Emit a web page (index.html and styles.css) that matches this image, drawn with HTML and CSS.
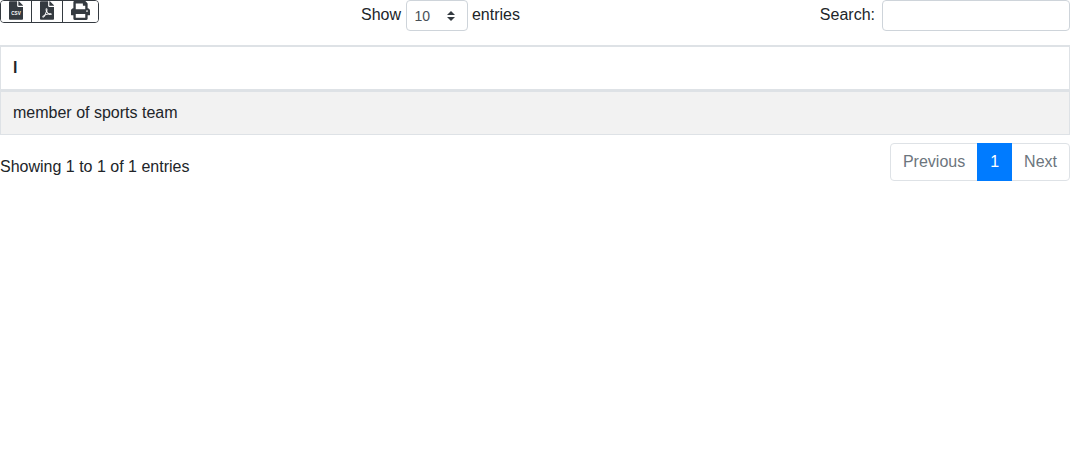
FILE: index.html
```html
<!DOCTYPE html>
<html lang="en">
<head>
  <meta charset="UTF-8">
  <meta name="viewport" content="width=device-width, initial-scale=1.0">
  <title>Entries</title>
  <link rel="stylesheet" href="styles.css">
</head>
<body>

<div class="top-row">
  <div class="export-buttons">
    <button type="button" class="export-btn" title="CSV">
      <svg class="icon icon-file" viewBox="0 0 384 512">
        <path d="M224 136V0H24C10.7 0 0 10.7 0 24v464c0 13.3 10.7 24 24 24h336c13.3 0 24-10.7 24-24V160H248c-13.2 0-24-10.8-24-24zm160-14.1v6.1H256V0h6.1c6.4 0 12.5 2.5 17 7l97.9 98c4.5 4.5 7 10.6 7 16.9z"/>
        <text class="icon-label" x="192" y="380" text-anchor="middle" textLength="260" lengthAdjust="spacingAndGlyphs">CSV</text>
      </svg>
    </button>
    <button type="button" class="export-btn" title="PDF">
      <svg class="icon icon-file" viewBox="0 0 384 512">
        <path d="M181.9 256.1c-5-16-4.9-46.9-2-46.9 8.4 0 7.6 36.9 2 46.9zm-1.7 47.2c-7.7 20.2-17.3 43.3-28.4 62.7 18.3-7 39-17.2 62.9-21.9-12.7-9.6-24.9-23.4-34.5-40.8zM86.1 428.1c0 .8 13.2-5.4 34.9-40.2-6.7 6.3-29.1 24.5-34.9 40.2zM248 160h136v328c0 13.3-10.7 24-24 24H24c-13.3 0-24-10.7-24-24V24C0 10.7 10.7 0 24 0h200v136c0 13.2 10.8 24 24 24zm-8 171.8c-20-12.2-33.3-29-42.7-53.8 4.5-18.5 11.6-46.6 6.2-64.2-4.7-29.4-42.4-26.5-47.8-6.8-5 18.3-.4 44.1 8.1 77-11.6 27.6-28.7 64.6-40.8 85.8-.1 0-.1.1-.2.1-27.1 13.9-73.6 44.5-54.5 68 5.6 6.9 16 10 21.5 10 17.9 0 35.7-18 61.1-61.8 25.8-8.5 54.1-19.1 79-23.2 21.7 11.8 47.1 19.5 64 19.5 29.2 0 31.2-32 19.7-43.4-13.9-13.6-54.3-9.7-73.6-7.2zM377 105L279 7c-4.5-4.5-10.6-7-17-7h-6v128h128v-6.1c0-6.3-2.5-12.4-7-16.9zm-74.1 255.3c4.1-2.7-2.5-11.9-42.8-9 37.1 15.8 42.8 9 42.8 9z"/>
      </svg>
    </button>
    <button type="button" class="export-btn" title="Print">
      <svg class="icon icon-print" viewBox="0 0 512 512">
        <path d="M448 192V77.25c0-8.49-3.37-16.62-9.37-22.63L393.37 9.37c-6-6-14.14-9.37-22.63-9.37H96C78.33 0 64 14.33 64 32v160c-35.35 0-64 28.65-64 64v112c0 8.84 7.16 16 16 16h48v96c0 17.67 14.33 32 32 32h320c17.67 0 32-14.33 32-32v-96h48c8.84 0 16-7.16 16-16V256c0-35.35-28.65-64-64-64zm-64 256H128v-96h256v96zm0-224H128V64h192v48c0 8.84 7.16 16 16 16h48v96zm48 72c-13.25 0-24-10.75-24-24 0-13.26 10.75-24 24-24s24 10.74 24 24c0 13.25-10.75 24-24 24z"/>
      </svg>
    </button>
  </div>

  <label class="length-control">
    Show
    <select class="length-select">
      <option>10</option>
      <option>25</option>
      <option>50</option>
      <option>100</option>
    </select>
    entries
  </label>

  <label class="search-control">
    Search:
    <input type="search" class="search-input">
  </label>
</div>

<table class="data-table">
  <thead>
    <tr><th>l</th></tr>
  </thead>
  <tbody>
    <tr class="row-odd"><td>member of sports team</td></tr>
  </tbody>
</table>

<div class="bottom-row">
  <div class="table-info">Showing 1 to 1 of 1 entries</div>
  <ul class="pagination">
    <li class="page-item disabled"><a href="#">Previous</a></li>
    <li class="page-item active"><a href="#">1</a></li>
    <li class="page-item disabled"><a href="#">Next</a></li>
  </ul>
</div>

</body>
</html>
```

FILE: styles.css
```css
body {
  font-family: "Liberation Sans", Arial, sans-serif;
  font-size: 16px;
  line-height: 24px;
  color: #212529;
  background: #fff;
  margin: 0;
}

.top-row {
  display: grid;
  grid-template-columns: 99px 1fr 250px;
  align-items: start;
  height: 45px;
}

.export-buttons {
  display: flex;
  box-sizing: border-box;
  height: 23px;
  border: 1px solid #343a40;
  border-radius: 4px;
  overflow: hidden;
}
.export-btn {
  display: flex;
  padding: 0 8px;
  margin: 0;
  background: #fff;
  border: none;
  border-right: 1px solid #343a40;
}
.export-btn:last-child {
  border-right: none;
}
.icon {
  display: block;
  height: 19px;
  fill: #343a40;
}
.icon-file {
  width: 14px;
}
.icon-print {
  width: 19px;
}
.icon-label {
  font-family: "Liberation Sans", Arial, sans-serif;
  font-size: 165px;
  font-weight: bold;
  fill: #fff;
}

.length-control {
  display: flex;
  justify-content: center;
  align-items: flex-start;
  gap: 4.45px;
  padding-right: 38px;
  line-height: 29px;
}
.length-select {
  width: 62px;
  height: 31px;
  padding: 4px 24px 4px 8px;
  font-family: inherit;
  font-size: 14px;
  color: #495057;
  border: 1px solid #ced4da;
  border-radius: 4px;
  appearance: none;
  background: #fff url("data:image/svg+xml,%3csvg xmlns='http://www.w3.org/2000/svg' width='4' height='5' viewBox='0 0 4 5'%3e%3cpath fill='%23343a40' d='M2 0L0 2h4zm0 5L0 3h4z'/%3e%3c/svg%3e") no-repeat right 12px center / 8px 10px;
}

.search-control {
  display: flex;
  justify-content: flex-end;
  align-items: flex-start;
  gap: 7px;
  line-height: 29px;
}
.search-input {
  width: 188px;
  height: 31px;
  box-sizing: border-box;
  padding: 4px 8px;
  font-size: 14px;
  border: 1px solid #ced4da;
  border-radius: 4px;
}

.data-table {
  width: 100%;
  border-collapse: separate;
  border-spacing: 0;
  border: 1px solid #dee2e6;
}
.data-table th,
.data-table td {
  padding: 8.5px 12px 9.5px;
  text-align: left;
}
.data-table th {
  border-top: 1px solid #dee2e6;
  border-bottom: 2px solid #dee2e6;
}
.data-table td {
  border-top: 1px solid #dee2e6;
}
.row-odd {
  background: #f2f2f2;
}

.bottom-row {
  display: flex;
  justify-content: space-between;
  align-items: flex-start;
  margin-top: 8px;
}
.table-info {
  padding-top: 12px;
}
.pagination {
  display: flex;
  list-style: none;
  margin: 0;
  padding: 0;
}
.page-item a {
  display: block;
  padding: 6px 12px;
  margin-left: -1px;
  text-decoration: none;
  border: 1px solid #dee2e6;
  background: #fff;
}
.page-item:first-child a {
  margin-left: 0;
  border-radius: 4px 0 0 4px;
}
.page-item:last-child a {
  border-radius: 0 4px 4px 0;
}
.page-item.disabled a {
  color: #6c757d;
}
.page-item.active a {
  position: relative;
  color: #fff;
  background: #007bff;
  border-color: #007bff;
}
```
